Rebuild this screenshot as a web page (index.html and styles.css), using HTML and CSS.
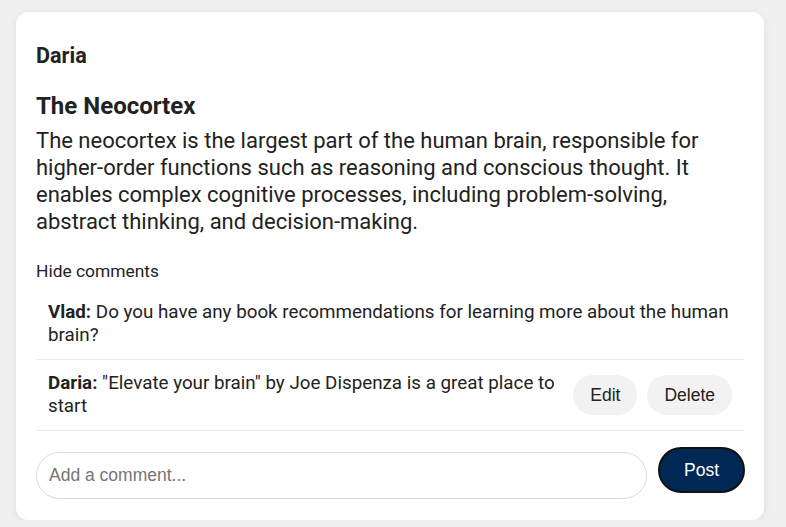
FILE: index.html
```html
<!DOCTYPE html>
<html>
<head>
<meta charset="utf-8">
<link rel="stylesheet" href="styles.css">
</head>
<body>
<div class="card">
  <div class="author">Daria</div>
  <h2 class="title">The Neocortex</h2>
  <p class="content">The neocortex is the largest part of the human brain, responsible for higher-order functions such as reasoning and conscious thought. It enables complex cognitive processes, including problem-solving, abstract thinking, and decision-making.</p>
  <div class="toggle">Hide comments</div>
  <div class="comments">
    <div class="comment">
      <div class="comment-text"><b>Vlad:</b> Do you have any book recommendations for learning more about the human brain?</div>
    </div>
    <div class="comment">
      <div class="comment-text"><b>Daria:</b> "Elevate your brain" by Joe Dispenza is a great place to start</div>
      <div class="actions">
        <button class="btn">Edit</button>
        <button class="btn">Delete</button>
      </div>
    </div>
  </div>
  <div class="add">
    <input class="input" type="text" placeholder="Add a comment...">
    <button class="post">Post</button>
  </div>
</div>
</body>
</html>
```
FILE: styles.css
```css
html, body { margin: 0; padding: 0; }
body {
  background: #f0f0f0;
  font-family: Roboto, "Liberation Sans", sans-serif;
  color: #222;
  padding: 12px 22px 0 16px;
}
.card {
  background: #fff;
  border-radius: 12px;
  box-shadow: 0 2px 8px rgba(0,0,0,0.08);
  padding: 32px 20px 21px 20px;
}
.author {
  font-weight: 700;
  font-size: 21.6px;
  line-height: 24px;
}
.title {
  font-size: 24px;
  font-weight: 700;
  margin: 24px 0 7px 0;
  line-height: 28px;
}
.content {
  font-size: 22px;
  line-height: 27px;
  margin: 0 0 26px 0;
}
.toggle {
  font-size: 17.4px;
  line-height: 20px;
  margin-bottom: 8px;
}
.comment {
  display: flex;
  align-items: center;
  gap: 16px;
  padding: 12px;
  border-bottom: 1px solid #ebebeb;
  font-size: 18.8px;
  line-height: 23px;
}
.comment-text { flex: 1; }
.comment-text b { font-weight: 700; }
.actions { display: flex; gap: 10px; }
.btn {
  font-family: "Liberation Sans", Arial, sans-serif;
  font-size: 17.5px;
  background: #f2f2f2;
  border: none;
  border-radius: 20px;
  height: 40px;
  padding: 0 17px;
  color: #222;
}
.add {
  display: flex;
  align-items: flex-start;
  gap: 11px;
  margin-top: 16px;
}
.input {
  flex: 1;
  height: 47px;
  box-sizing: border-box;
  border: 1px solid #dadada;
  border-radius: 24px;
  padding: 0 12px;
  font-family: "Liberation Sans", Arial, sans-serif;
  font-size: 17.5px;
  margin-top: 5px;
}
.input::placeholder { color: #757575; }
.post {
  font-family: "Liberation Sans", Arial, sans-serif;
  font-size: 17.5px;
  background: #002855;
  color: #fff;
  border: 2px solid #111;
  border-radius: 24px;
  height: 46px;
  width: 87px;
  margin-right: -1px;
}
```
